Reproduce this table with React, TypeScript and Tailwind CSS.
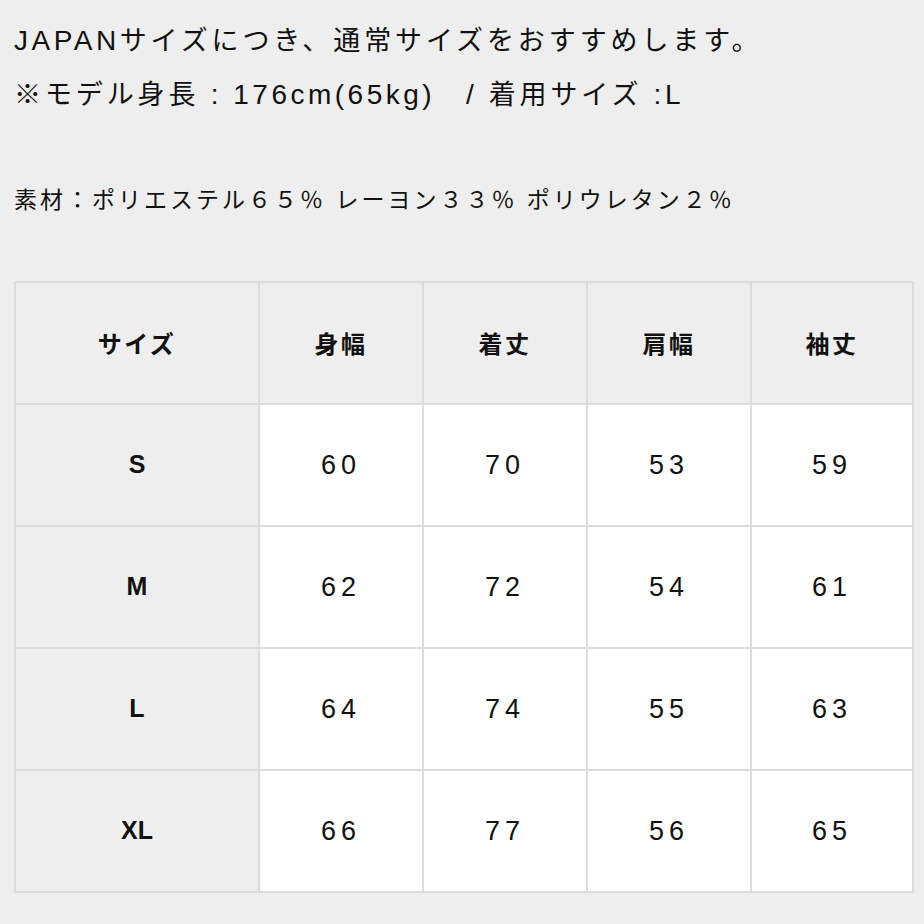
import React from 'react';

const headers = ['サイズ', '身幅', '着丈', '肩幅', '袖丈'];

const rows: string[][] = [
  ['S', '60', '70', '53', '59'],
  ['M', '62', '72', '54', '61'],
  ['L', '64', '74', '55', '63'],
  ['XL', '66', '77', '56', '65'],
];

const font = { fontFamily: '"Liberation Sans", "Noto Sans CJK JP", sans-serif' };

// latin runs render a bit larger than the kana around them
const Lt: React.FC<{ children: React.ReactNode }> = ({ children }) => (
  <span className="text-[28px] tracking-[3.5px]">{children}</span>
);

const App: React.FC = () => {
  return (
    <div className="w-[924px] h-[924px] bg-[#eeeeee] text-[#111111] overflow-hidden" style={font}>
      <div className="px-[14px] pt-[21px]">
        <p className="text-[27px] leading-[40px] tracking-[3.9px] whitespace-pre">
          <Lt>JAPAN</Lt>サイズにつき、通常サイズをおすすめします。
        </p>
        <p className="mt-[14px] text-[27px] leading-[40px] tracking-[3.9px] whitespace-pre">
          ※モデル身長<Lt> : 176cm(65kg)</Lt>　<Lt>/ </Lt>着用サイズ<Lt> :L</Lt>
        </p>
        <p className="mt-[65px] text-[23px] leading-[40px] tracking-[3px] whitespace-pre">
          素材：ポリエステル６５％ レーヨン３３％ ポリウレタン２％
        </p>
      </div>

      <div className="mx-[14px] mt-[61px] w-[900px] border-2 border-[#dcdcdc]">
        <div className="grid grid-cols-[242px_164px_164px_164px_162px] h-[120px] bg-[#eeeeee]">
          {headers.map((h, i) => (
            <div
              key={h}
              className={`flex items-center justify-center text-[24px] font-bold tracking-[0.1em] ${i > 0 ? 'border-l-2 border-[#dcdcdc]' : ''}`}
              style={{ fontFamily: '"Noto Sans CJK JP", sans-serif' }}
            >
              {h}
            </div>
          ))}
        </div>
        {rows.map((r) => (
          <div
            key={r[0]}
            className="grid grid-cols-[242px_164px_164px_164px_162px] h-[122px] border-t-2 border-[#dcdcdc]"
          >
            {r.map((c, i) => (
              <div
                key={i}
                className={
                  i === 0
                    ? 'flex items-center justify-center bg-[#eeeeee] text-[25px] font-bold'
                    : 'flex items-center justify-center bg-white border-l-2 border-[#dcdcdc] text-[27px] tracking-[0.18em]'
                }
              >
                {c}
              </div>
            ))}
          </div>
        ))}
      </div>
    </div>
  );
};

export default App;
